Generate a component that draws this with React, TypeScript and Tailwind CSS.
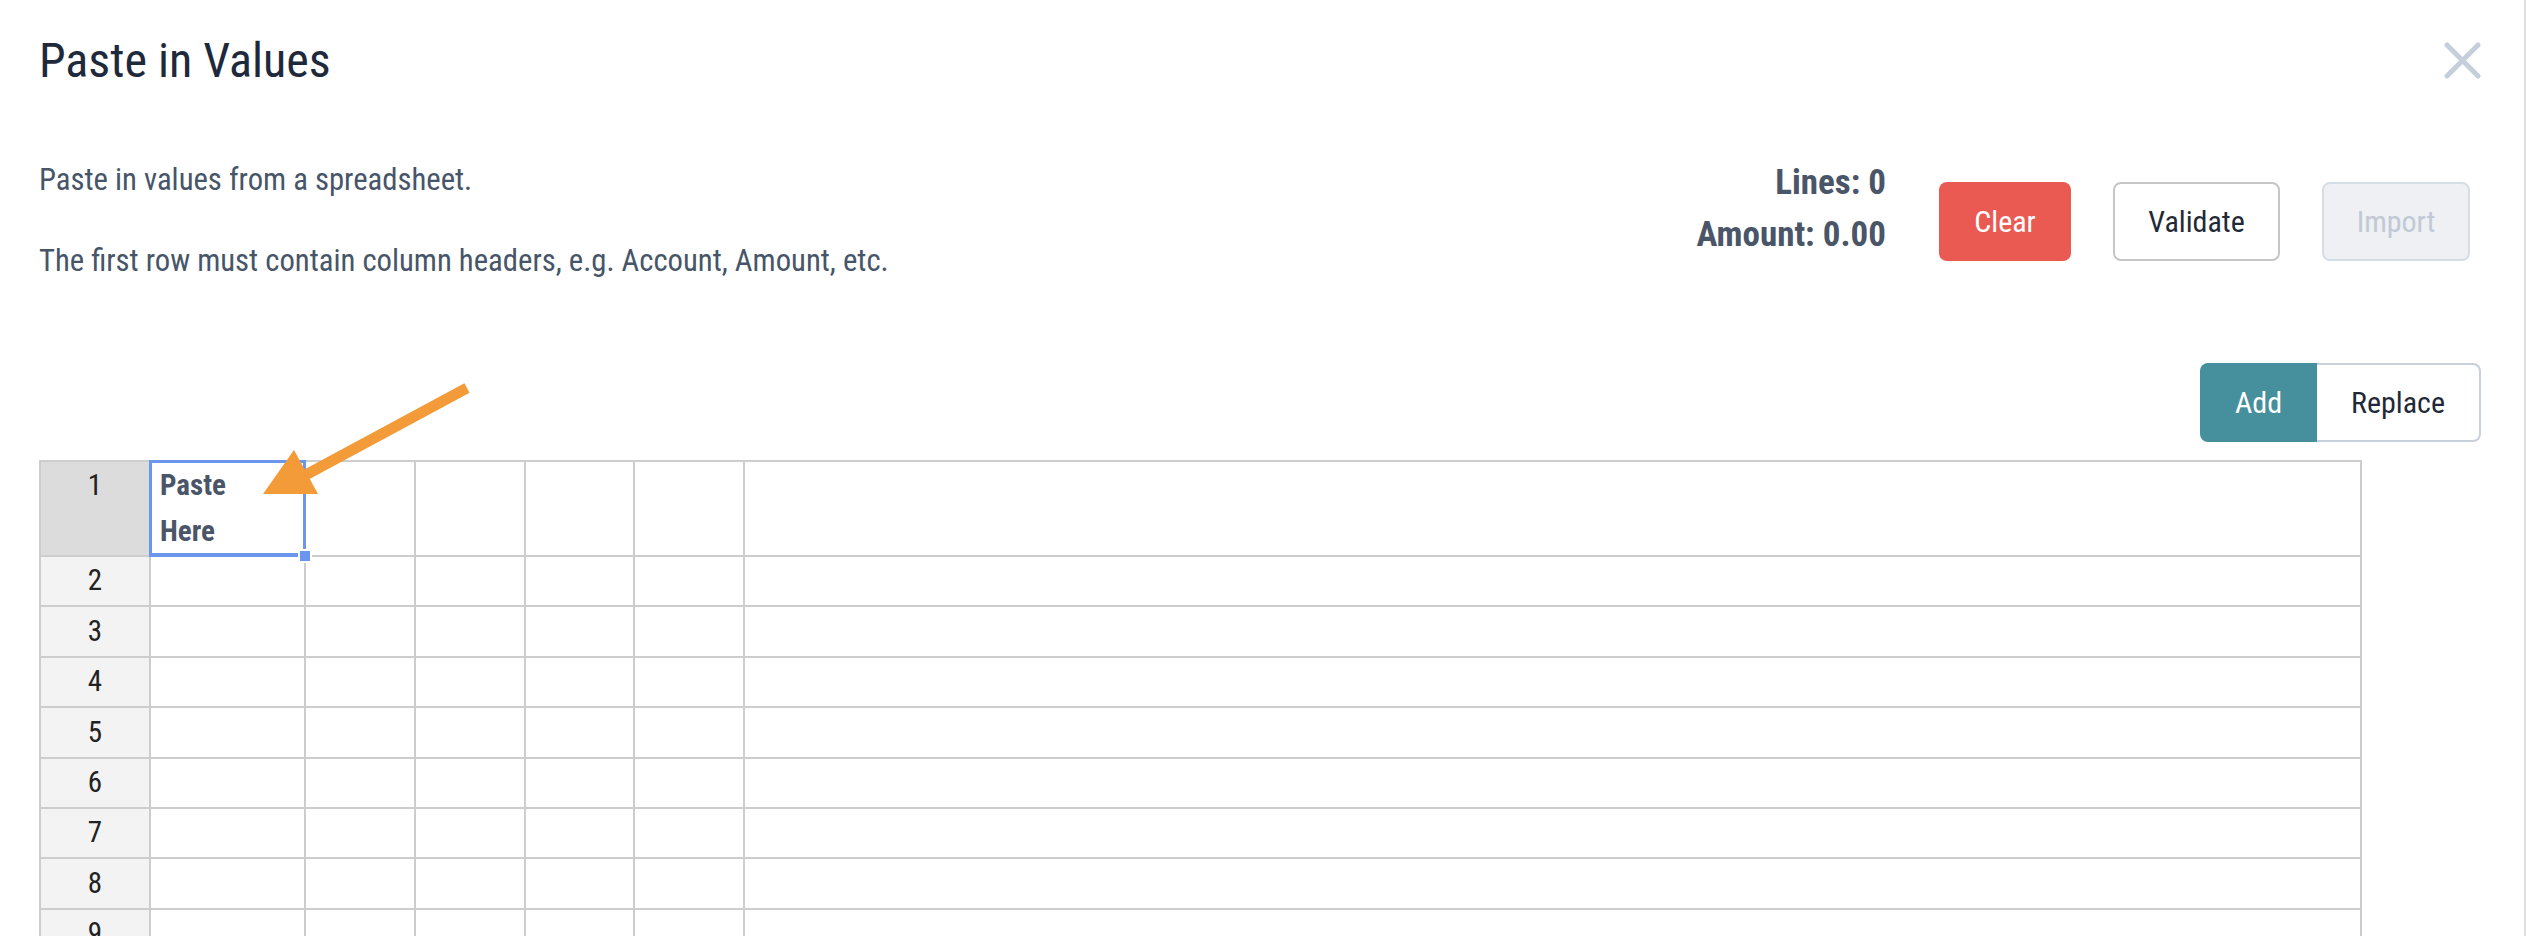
const COLS = ["w-[110px]", "w-[155px]", "w-[110px]", "w-[110px]", "w-[109px]", "w-[110px]", "flex-1"];
const ROWS = [1, 2, 3, 4, 5, 6, 7, 8, 9];

function SheetRow({ n }: { n: number }) {
  const first = n === 1;
  return (
    <div className={`flex ${first ? "h-[95px]" : "h-[50.4px]"}`}>
      {COLS.map((w, i) => {
        if (i === 0) {
          return (
            <div
              key={i}
              className={`${w} shrink-0 border-r-2 border-b-2 border-[#cdcdcd] flex justify-center text-[29px] text-[#222] ${
                first ? "bg-[#dcdcdc] items-start leading-[46px]" : "bg-[#f3f3f3] items-center"
              }`}
            >
              {n}
            </div>
          );
        }
        if (first && i === 1) {
          return (
            <div key={i} className={`${w} shrink-0 relative border-r-2 border-b-2 border-[#cdcdcd] pl-[9px]`}>
              <div className="font-bold text-[29px] leading-[46px] text-[#4a5568]">
                Paste
                <br />
                Here
              </div>
              <div className="absolute -left-[2px] -top-[2px] -right-[2px] -bottom-[2px] border-[3px] border-b-4 border-[#6b96ee]" />
              <div className="absolute -right-[8px] -bottom-[8px] w-[14px] h-[14px] bg-[#6b96ee] border-2 border-white" />
            </div>
          );
        }
        return <div key={i} className={`${w} ${i < 6 ? "shrink-0" : ""} border-r-2 border-b-2 border-[#cdcdcd]`} />;
      })}
    </div>
  );
}

export default function App() {
  return (
    <div className="relative w-[2526px] h-[936px] overflow-hidden bg-white border-r-2 border-[#dedede] font-['Roboto_Condensed',Roboto,sans-serif] font-stretch-condensed">
      <div className="pl-[39px]">
        {/* header */}
        <div className="flex items-start justify-between pt-[32px] pr-[43px]">
          <h1 className="text-[48px] leading-[58px] text-[#1e293b]">Paste in Values</h1>
          <button type="button" className="mt-[10px]" aria-label="Close">
            <svg width="37" height="37" viewBox="0 0 37 37" fill="none" stroke="#c5cfdc" strokeWidth="5" strokeLinecap="round">
              <path d="M3 3L34 34M34 3L3 34" />
            </svg>
          </button>
        </div>

        {/* intro + actions */}
        <div className="flex items-start justify-between mt-[67px] pr-[54px]">
          <div className="text-[30.7px] leading-[45px] text-[#475569]">
            <p className="mb-[36px]">Paste in values from a spreadsheet.</p>
            <p>The first row must contain column headers, e.g. Account, Amount, etc.</p>
          </div>
          <div className="flex items-end">
            <div className="text-right font-bold text-[35px] leading-[52px] text-[#4a5568]">
              <div>Lines: 0</div>
              <div>Amount: 0.00</div>
            </div>
            <div className="flex gap-[42px] ml-[53px]">
              <button type="button" className="w-[132px] h-[79px] rounded-[8px] bg-[#eb5a52] text-white text-[30px]">
                Clear
              </button>
              <button type="button" className="w-[167px] h-[79px] rounded-[8px] border-2 border-[#c6c6c6] bg-white text-[#1f2937] text-[30px]">
                Validate
              </button>
              <button type="button" disabled className="w-[148px] h-[79px] rounded-[8px] border-2 border-[#d5dde7] bg-[#eef0f4] text-[#c0c9d4] text-[30px]">
                Import
              </button>
            </div>
          </div>
        </div>

        {/* mode toggle */}
        <div className="flex justify-end mt-[80px] pr-[43px]">
          <button type="button" className="w-[117px] h-[79px] rounded-l-[8px] bg-[#468f9c] text-white text-[30px]">
            Add
          </button>
          <button type="button" className="w-[164px] h-[79px] rounded-r-[8px] border-2 border-l-0 border-[#c8d0dc] bg-white text-[#1f2937] text-[30px]">
            Replace
          </button>
        </div>

        {/* sheet */}
        <div className="mt-[18px] w-[2323px] border-l-2 border-t-2 border-[#cdcdcd]">
          {ROWS.map((n) => (
            <SheetRow key={n} n={n} />
          ))}
        </div>
      </div>

      {/* annotation arrow */}
      <svg className="absolute left-0 top-0 pointer-events-none" width="2526" height="936">
        <line x1="467" y1="388" x2="300" y2="478" stroke="#f29b38" strokeWidth="11" />
        <polygon points="294,450 263,494 318,494" fill="#f29b38" />
      </svg>
    </div>
  );
}
